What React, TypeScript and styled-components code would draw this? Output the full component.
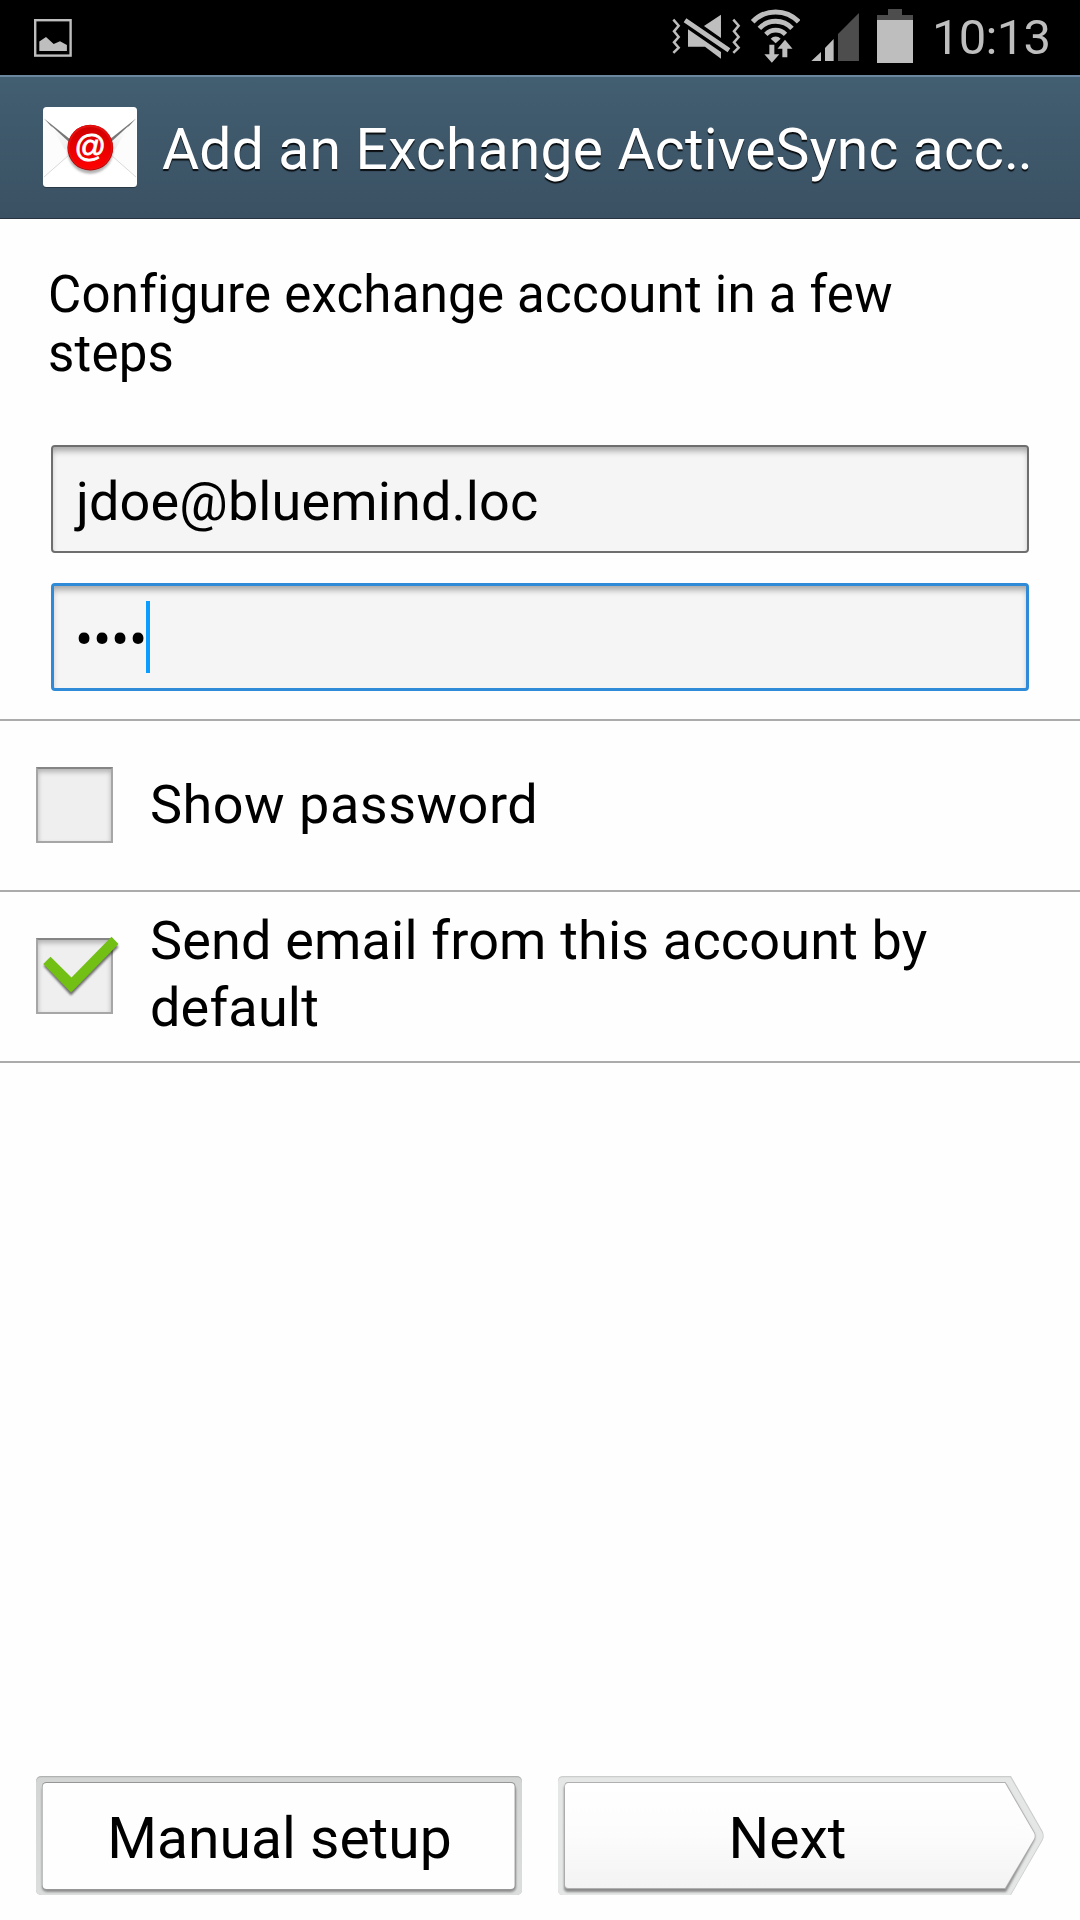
import React from "react";
import styled, { createGlobalStyle } from "styled-components";

const GlobalStyle = createGlobalStyle`
  * { box-sizing: border-box; }
  body { margin: 0; background: #fefefe; }
`;

const Screen = styled.div`
  width: 1080px;
  height: 1920px;
  display: flex;
  flex-direction: column;
  overflow: hidden;
  background: #fefefe;
  color: #000;
  font-family: Roboto, "Noto Sans", sans-serif;
`;

const StatusBar = styled.div`
  flex: none;
  height: 75px;
  display: flex;
  align-items: flex-start;
  justify-content: space-between;
  padding: 0 31px 0 34px;
  background: #000;
`;

const StatusGroup = styled.div`
  display: flex;
  align-items: flex-start;
`;

const StatusIcon = styled.svg<{ $top: number; $gap?: number }>`
  display: block;
  flex: none;
  margin-top: ${(p) => p.$top}px;
  margin-right: ${(p) => p.$gap ?? 0}px;
`;

const Clock = styled.div`
  width: 117px;
  margin-top: 8px;
  color: #bebebe;
  font-size: 49px;
  letter-spacing: -0.75px;
  line-height: 60px;
  white-space: nowrap;
`;

const TitleBar = styled.header`
  flex: none;
  height: 144px;
  display: flex;
  align-items: center;
  gap: 25px;
  padding-left: 43px;
  border-top: 2px solid #6b87a0;
  border-bottom: 1px solid #27333e;
  background: linear-gradient(#425e71, #3a5163);
`;

const MailBadge = styled.svg`
  display: block;
  flex: none;
  margin-bottom: 1px;
  overflow: visible;
`;

const Title = styled.h1`
  margin: 5px 0 0;
  color: #fff;
  font-size: 57px;
  font-weight: 400;
  letter-spacing: 0.19px;
  line-height: 68px;
  white-space: nowrap;
  text-shadow: 0 2px 1px rgba(0, 0, 0, 0.85);
`;

const TitleDots = styled.span`
  letter-spacing: -1.4px;
`;

const Intro = styled.p`
  margin: 0;
  padding: 46px 140px 0 48px;
  height: 226px;
  font-size: 51px;
  letter-spacing: 0.23px;
  line-height: 59px;
`;

const Fields = styled.div`
  display: flex;
  flex-direction: column;
  gap: 30px;
  padding: 0 51px 28px;
`;

const Field = styled.div<{ $focused?: boolean }>`
  height: 108px;
  display: flex;
  align-items: center;
  padding-left: ${(p) => (p.$focused ? 21 : 23)}px;
  border: ${(p) => (p.$focused ? "3px solid #2f8bd7" : "2px solid #6e6e6e")};
  border-radius: 4px;
  background: #f5f5f5;
  box-shadow: inset 0 6px 6px -2px rgba(0, 0, 0, 0.32);
  font-size: 54px;
  line-height: 64px;
`;

const FieldText = styled.span<{ $spacing: number }>`
  padding-top: 6px;
  letter-spacing: ${(p) => p.$spacing}px;
`;

const Caret = styled.span`
  width: 4px;
  height: 72px;
  margin-left: -1px;
  background: #0a9dff;
`;

const Options = styled.div`
  border-bottom: 2px solid #ababab;
`;

const OptionRow = styled.label`
  height: 171px;
  display: flex;
  align-items: center;
  gap: 37px;
  padding-left: 36px;
  border-top: 2px solid #ababab;
`;

const OptionText = styled.span<{ $lift: number; $spacing: number }>`
  max-width: 860px;
  padding-bottom: ${(p) => p.$lift}px;
  font-size: 54px;
  letter-spacing: ${(p) => p.$spacing}px;
  line-height: 67px;
`;

const CheckSquare = styled.span`
  position: relative;
  flex: none;
  width: 77px;
  height: 76px;
  margin-bottom: 1px;
  border: 2px solid #a6a6a6;
  border-top-color: #858585;
  background: #efefef;
  box-shadow: inset 0 3px 5px rgba(0, 0, 0, 0.25);
`;

const CheckMark = styled.svg`
  position: absolute;
  left: -2px;
  top: -2px;
  overflow: visible;
`;

const Footer = styled.footer`
  display: flex;
  gap: 36px;
  margin-top: auto;
  padding: 0 36px 25px;
`;

const FooterButton = styled.button`
  position: relative;
  width: 486px;
  height: 119px;
  padding: 0;
  border: 0;
  background: none;
  color: #000;
  font: inherit;
`;

const ButtonShape = styled.svg`
  position: absolute;
  left: 0;
  top: 0;
`;

const ButtonLabel = styled.span<{ $shift: number }>`
  position: relative;
  display: block;
  padding: 6px ${(p) => Math.max(0, -p.$shift)}px 0 ${(p) => Math.max(0, p.$shift)}px;
  font-size: 57px;
  line-height: 68px;
`;

const GREY = "#bebebe";
const DIM = "#4d4d4d";

function PictureIcon() {
  return (
    <StatusIcon $top={19} width={38} height={38} viewBox="0 0 38 38">
      <rect x="1.2" y="1.2" width="35.4" height="35.4" fill="none" stroke={GREY} strokeWidth="2.4" />
      <path d="M5.3 32V22.5L12 18l7.7 7 6.3-2.7 6.9 3.7v6z" fill={GREY} />
    </StatusIcon>
  );
}

function VibrateMutedIcon() {
  return (
    <StatusIcon $top={14.3} $gap={8.7} width={69.3} height={45} viewBox="20 28 208 135">
      <g fill="none" stroke={GREY} strokeWidth="7.5">
        <path d="M24 45l16 18-14 17 14 17-14 16 14 16-16 16" />
        <path d="M204 45l16 18-14 17 14 17-14 16 14 16-16 16" />
      </g>
      <path d="M63 41l132 90-8 12L55 53zM167 30v70l-51-36zM68 74l99 68v20l-48-36H68z" fill={GREY} />
    </StatusIcon>
  );
}

function WifiIcon() {
  return (
    <StatusIcon $top={9.3} $gap={10.7} width={50.7} height={54.3} viewBox="254 13 152 163">
      <g fill="none" stroke={GREY}>
        <path d="M262 51.5A95 95 0 0 1 400 51.5" strokeWidth="15" />
        <path d="M282 71A67 67 0 0 1 380 71" strokeWidth="14.5" />
        <path d="M301.500 89A41 41 0 0 1 360.500 89" strokeWidth="14" />
      </g>
      <path d="M316 102a20 20 0 0 1 30 0l-15 14z" fill={GREY} />
      <path
        d="M312 120h15v29h15l-22.500 25.500L297 149h15zM351 158h15v-26h15.500L359 105l-22.500 27H351z"
        fill={GREY}
        stroke="#000"
        strokeWidth="5"
        paintOrder="stroke"
      />
    </StatusIcon>
  );
}

function SignalIcon() {
  return (
    <StatusIcon $top={12.7} $gap={17.7} width={48.3} height={48.7} viewBox="483 38 145 146">
      <path d="M483 183l30-28v28zM525 143l26-27v67h-26z" fill={GREY} />
      <path d="M564 101l63-63v145h-63z" fill={DIM} />
    </StatusIcon>
  );
}

function BatteryIcon() {
  return (
    <StatusIcon $top={9} $gap={19} width={36} height={54} viewBox="0 0 36 54">
      <path d="M11 0h14v6h11v5H0V6h11z" fill={DIM} />
      <rect y="11" width="36" height="43" fill={GREY} />
    </StatusIcon>
  );
}

function MailIcon() {
  return (
    <MailBadge width={94} height={80} viewBox="0 0 94 80">
      <defs>
        <linearGradient id="seal" x1="0" y1="0" x2="0" y2="1">
          <stop offset="0" stopColor="#d00000" />
          <stop offset="1" stopColor="#ff0000" />
        </linearGradient>
        <linearGradient id="fold" x1="0" y1="0" x2="0" y2="1">
          <stop offset="0" stopColor="#fff" />
          <stop offset="1" stopColor="#ededed" />
        </linearGradient>
        <filter id="soft" x="-30%" y="-30%" width="160%" height="160%">
          <feGaussianBlur stdDeviation="0.8" />
        </filter>
      </defs>
      <rect y="1" width="94" height="80" rx="3.500" fill="#1f2d38" opacity="0.7" />
      <rect width="94" height="80" rx="3.500" fill="#fff" />
      <path d="M1 12l24 21v16L1 70z" fill="#fcfcfc" />
      <path d="M93 12L69 33v16l24 21z" fill="#fcfcfc" />
      <path d="M1 11.500L28 33l-4 3.500z" fill="#777" />
      <path d="M93 11.500L66 33l4 3.500z" fill="#777" />
      <path d="M8 18.500L26 35l-4 8z" fill="url(#fold)" />
      <path d="M86 18.500L68 35l4 8z" fill="url(#fold)" />
      <path d="M1 70l25-22M93 70L68 48" stroke="#dadada" strokeWidth="1" />
      <circle cx="47.300" cy="44" r="22.700" fill="#9a9a9a" opacity="0.75" filter="url(#soft)" />
      <circle cx="47.300" cy="40.700" r="22.900" fill="#b80000" />
      <circle cx="47.300" cy="40.300" r="22.400" fill="#e61010" />
      <circle cx="47.300" cy="40.700" r="20.800" fill="url(#seal)" />
      <text
        x="47.200"
        y="49.500"
        textAnchor="middle"
        fontFamily='"Liberation Sans", Arial, sans-serif'
        fontSize="31"
        fill="#fff"
        stroke="#fff"
        strokeWidth="0.8"
      >
        @
      </text>
    </MailBadge>
  );
}

function GreenCheck() {
  return (
    <CheckMark width={77} height={76} viewBox="0 0 77 76">
      <defs>
        <filter id="checkShade" x="-10%" y="-10%" width="120%" height="130%">
          <feGaussianBlur stdDeviation="0.8" />
        </filter>
      </defs>
      <path d="M7.500 26l7-7L35.500 40.500 75.500-1l7 8-47.500 48.500z" transform="translate(0 2)" fill="#000" opacity="0.55" filter="url(#checkShade)" />
      <path d="M7.300 26l7.200-7.300L35.500 39.500 75.500-1.300l7 7.300L35 54.500z" fill="#73c015" />
    </CheckMark>
  );
}

function PlainShape() {
  return (
    <ButtonShape width={486} height={119} viewBox="0 0 486 119">
      <defs>
        <linearGradient id="rim" x1="0" y1="0" x2="0" y2="1">
          <stop offset="0" stopColor="#d3d4d4" />
          <stop offset="1" stopColor="#dcdddd" />
        </linearGradient>
        <filter id="drop" x="-5%" y="-10%" width="110%" height="125%">
          <feGaussianBlur stdDeviation="1.1" />
        </filter>
      </defs>
      <rect width="486" height="119" rx="5" fill="#b0b1b1" />
      <rect y="1.200" width="486" height="117.800" rx="5" fill="url(#rim)" />
      <rect x="6" y="9" width="474" height="107" rx="5" fill="#8c8c8c" filter="url(#drop)" />
      <rect x="6" y="6" width="473.500" height="108" rx="4.500" fill="#969696" />
      <rect x="6.600" y="7" width="472" height="106" rx="4" fill="#fefefe" />
    </ButtonShape>
  );
}

function ArrowShape() {
  return (
    <ButtonShape width={486} height={119} viewBox="0 0 486 119">
      <defs>
        <linearGradient id="face" x1="0" y1="0" x2="0" y2="1">
          <stop offset="0" stopColor="#ffffff" />
          <stop offset="0.5" stopColor="#fcfcfc" />
          <stop offset="1" stopColor="#f3f3f3" />
        </linearGradient>
      </defs>
      <path d="M5 0H453L484.500 55Q487 60 484.500 64.500L453 119H5Q0 119 0 114V5Q0 0 5 0z" fill="#cbcccc" />
      <path d="M5 1.200H452.300L483.800 56Q486 60 483.800 64L452.300 119H5Q0 119 0 114V6Q0 1.200 5 1.200z" fill="#e5e6e6" />
      <path
        d="M10 9H448L476 57Q478 61 476 65L448 116H10Q6 116 6 112V13Q6 9 10 9z"
        fill="#8a8a8a"
        filter="url(#drop)"
      />
      <path d="M10 6H447.500L476.500 56.500Q478 60 476.500 63L447.500 113H10Q6.500 113 6.500 109V10Q6.500 6 10 6z" fill="#b0b0b0" />
      <path d="M10.500 7H447L476 57Q477.500 60 476 63L447 112H10.500Q7 112 7 108.500V10.500Q7 7 10.500 7z" fill="url(#face)" />
    </ButtonShape>
  );
}

export default function App() {
  return (
    <Screen>
      <GlobalStyle />
      <StatusBar>
        <PictureIcon />
        <StatusGroup>
          <VibrateMutedIcon />
          <WifiIcon />
          <SignalIcon />
          <BatteryIcon />
          <Clock>10:13</Clock>
        </StatusGroup>
      </StatusBar>
      <TitleBar>
        <MailIcon />
        <Title>
          Add an Exchange ActiveSync acc<TitleDots>..</TitleDots>
        </Title>
      </TitleBar>
      <Intro>Configure exchange account in a few steps</Intro>
      <Fields>
        <Field>
          <FieldText $spacing={0.12}>jdoe@bluemind.loc</FieldText>
        </Field>
        <Field $focused>
          <FieldText $spacing={-0.2}>••••</FieldText>
          <Caret />
        </Field>
      </Fields>
      <Options>
        <OptionRow>
          <CheckSquare />
          <OptionText $lift={3} $spacing={0.5}>
            Show password
          </OptionText>
        </OptionRow>
        <OptionRow>
          <CheckSquare>
            <GreenCheck />
          </CheckSquare>
          <OptionText $lift={5} $spacing={0.17}>
            Send email from this account by default
          </OptionText>
        </OptionRow>
      </Options>
      <Footer>
        <FooterButton>
          <PlainShape />
          <ButtonLabel $shift={1}>Manual setup</ButtonLabel>
        </FooterButton>
        <FooterButton>
          <ArrowShape />
          <ButtonLabel $shift={-27}>Next</ButtonLabel>
        </FooterButton>
      </Footer>
    </Screen>
  );
}
